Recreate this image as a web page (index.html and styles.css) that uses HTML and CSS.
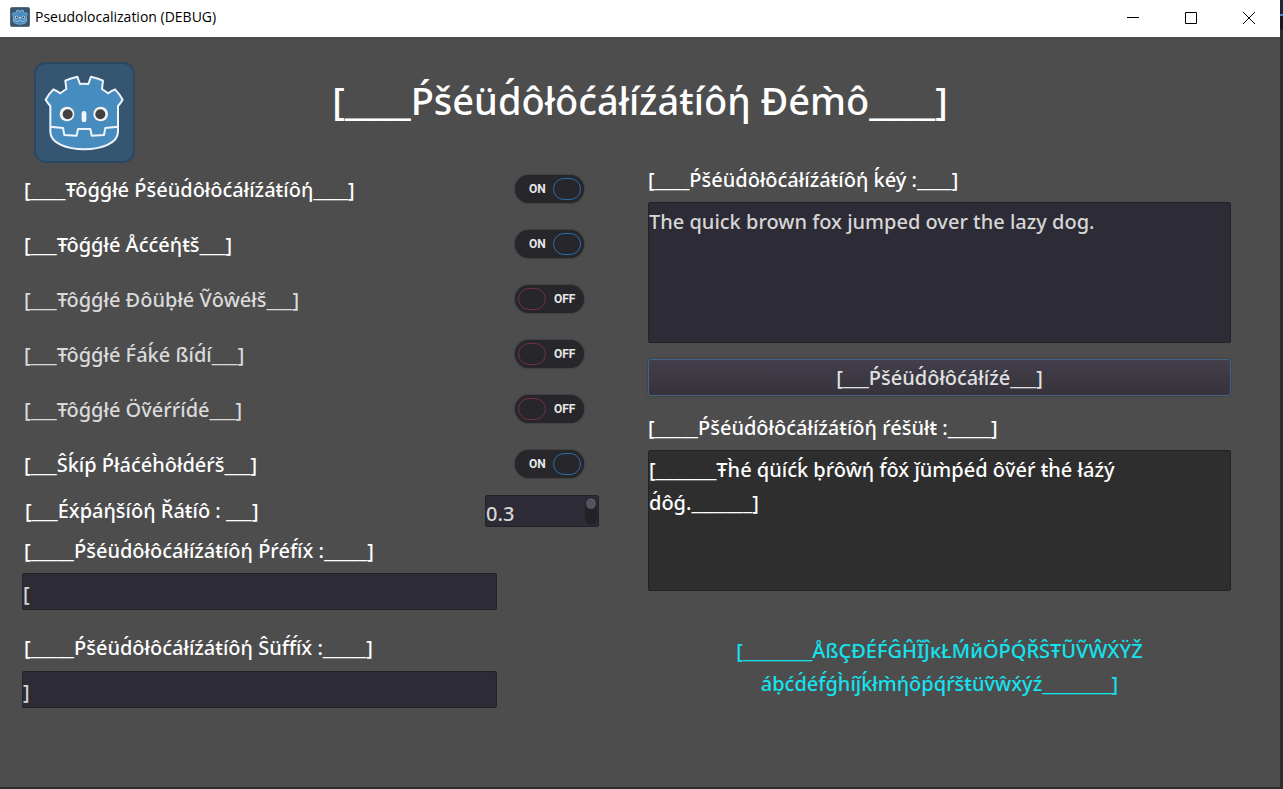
FILE: index.html
```html
<!DOCTYPE html>
<html lang="en">
<head>
<meta charset="utf-8">
<title>Pseudolocalization (DEBUG)</title>
<link rel="stylesheet" href="styles.css">
</head>
<body>
<svg class="sprite" aria-hidden="true">
  <symbol id="robot" viewBox="102 186 303 303">
    <rect x="105" y="189" width="297" height="297" rx="32" fill="#355570" stroke="#294861" stroke-width="6"/>
    <g stroke="#eef4f9" stroke-width="6" stroke-linejoin="round">
      <path fill="#478cbf" d="M240 252L232 230Q212 234 196 242L199 267Q190 273 181 280Q171 273 160 268Q147 281 137 299Q143 309 151 318V395C151 465 354 465 354 395V318Q362 309 368 299Q358 281 345 268Q334 273 324 280Q315 273 306 267L309 242Q293 234 273 230L265 252Q252 250 240 252Z"/>
      <path fill="none" d="M151 380L189 384L193 405L230 407L234 387H271L275 407L312 405L316 384L354 380"/>
    </g>
    <g fill="#f4f4f4"><circle cx="201" cy="342" r="22"/><circle cx="302" cy="342" r="22"/><rect x="245" y="333" width="14" height="34" rx="7"/></g>
    <g fill="#414042"><circle cx="203" cy="343" r="15"/><circle cx="301" cy="343" r="15"/></g>
  </symbol>
</svg>
<div class="window">
  <header class="titlebar">
    <svg class="app-icon" aria-hidden="true"><use href="#robot"/></svg>
    <span class="app-name">Pseudolocalization (DEBUG)</span>
    <button class="win-btn" aria-label="Minimize"><svg viewBox="0 0 12 12"><path d="M0 5.500H12"/></svg></button>
    <button class="win-btn" aria-label="Maximize"><svg viewBox="0 0 12 12"><path d="M.5 .5H11.500V11.500H.5Z"/></svg></button>
    <button class="win-btn" aria-label="Close"><svg viewBox="0 0 12 12"><path d="M0 0L12 12M12 0L0 12"/></svg></button>
  </header>
  <main class="content">
    <div class="banner">
      <svg class="logo" aria-hidden="true"><use href="#robot"/></svg>
      <h1 class="title">[____Ṕšéüd́ôłôćáłíźáŧíôή Ðém̀ô____]</h1>
    </div>
    <div class="columns">
      <section class="options">
        <label class="toggle-row is-on"><span>[____Ŧôǵǵłé Ṕšéüd́ôłôćáłíźáŧíôή____]</span><input class="toggle" type="checkbox" checked></label>
        <label class="toggle-row is-on"><span>[___Ŧôǵǵłé Åććéήŧš___]</span><input class="toggle" type="checkbox" checked></label>
        <label class="toggle-row"><span>[___Ŧôǵǵłé Ðôüḅłé Ṽôŵéłš___]</span><input class="toggle" type="checkbox"></label>
        <label class="toggle-row"><span>[___Ŧôǵǵłé F́áḱé ßíd́í___]</span><input class="toggle" type="checkbox"></label>
        <label class="toggle-row"><span>[___Ŧôǵǵłé Öṽéŕŕíd́é___]</span><input class="toggle" type="checkbox"></label>
        <label class="toggle-row is-on"><span>[___Ŝḱíṕ Ṕłáćéh̀ôłd́éŕš___]</span><input class="toggle" type="checkbox" checked></label>
        <div class="ratio-row">
          <label for="ratio">[___Éx́ṕáήšíôή Řáŧíô : ___]</label>
          <span class="spin"><input class="spin-input" id="ratio" type="text" value="0.3"><span class="scroll"></span></span>
        </div>
        <div class="field">
          <label for="prefix">[_____Ṕšéüd́ôłôćáłíźáŧíôή Ṕŕéf́íx́ :_____]</label>
          <input class="line-input" id="prefix" type="text" value="[">
        </div>
        <div class="field">
          <label for="suffix">[_____Ṕšéüd́ôłôćáłíźáŧíôή Ŝüf́f́íx́ :_____]</label>
          <input class="line-input" id="suffix" type="text" value="]">
        </div>
      </section>
      <section class="tester">
        <label class="tester-label" for="key">[____Ṕšéüd́ôłôćáłíźáŧíôή ḱéý :____]</label>
        <textarea class="key" id="key" spellcheck="false">The quick brown fox jumped over the lazy dog.</textarea>
        <button class="run">[___Ṕšéüd́ôłôćáłíźé___]</button>
        <label class="tester-label" for="result">[_____Ṕšéüd́ôłôćáłíźáŧíôή ŕéšüłŧ :_____]</label>
        <output class="result" id="result">[_______Ŧh̀é q́üíćḱ ḅŕôŵή f́ôx́ ǰüm̀ṕéd́ ôṽéŕ ŧh̀é łáźý<br>d́ôǵ._______]</output>
        <p class="alphabet">[________ÅßÇÐÉF́ĜĤĨĴĸŁḾйÖṔQ́ŘŜŦŨṼŴX́ŸŽ<br>áḅćd́éf́ǵh̀íǰḱłm̀ήôṕq́ŕšŧüṽŵx́ýź________]</p>
      </section>
    </div>
  </main>
</div>
</body>
</html>
```
FILE: styles.css
```css
*, *::before, *::after { box-sizing: border-box; }

body {
  margin: 0;
  min-height: 100vh;
  display: flex;
  padding: 0 3px 2px 0;
  background: linear-gradient(#1d2836 0 14px, #3d86c0 14px 16px, #17191f 16px 29px, #2c2c2e 29px 100%);
  font-family: "Noto Sans", "Open Sans", sans-serif;
  font-size: 20px;
  font-weight: 500;
  line-height: 28px;
  color: #fff;
}

.sprite { position: absolute; width: 0; height: 0; }

.window { flex: 1; display: flex; flex-direction: column; background: #4d4d4d; }

.titlebar { display: flex; height: 37px; background: #fff; color: #000; align-items: center; padding: 0 2px 0 10px; }
.app-icon { width: 20px; height: 20px; margin: 0 5px 3px 0; }
.app-name { flex: 1; font: 14px/20px "Open Sans", sans-serif; padding-bottom: 3px; }
.win-btn { width: 58px; height: 37px; border: 0; padding: 0 0 1px; background: none; display: grid; place-items: center; }
.win-btn svg { width: 12px; height: 12px; fill: none; stroke: #000; stroke-width: 1; }

.content { flex: 1; padding: 25px 49px 16px 22px; }

.banner { display: flex; align-items: flex-start; height: 100px; padding-left: 12px; }
.logo { width: 101px; height: 101px; flex: none; }
.title { flex: 1; margin: 12px 86px 0 0; text-align: center; font-size: 38px; line-height: 52px; font-weight: 500; color: #fff; white-space: nowrap; }

.columns { display: grid; grid-template-columns: 577fr 583fr; column-gap: 49px; }

.options { white-space: nowrap; }
.toggle-row { display: flex; justify-content: space-between; align-items: center; height: 55px; padding: 0 15px 0 2px; color: #dadada; }
.toggle-row.is-on { color: #fff; }

.toggle {
  appearance: none;
  position: relative;
  width: 69px;
  height: 28px;
  margin: 0 0 2px;
  border-radius: 14px;
  background: #27272b;
  box-shadow: 0 0 2px #27272b;
  font: 700 12px/28px Roboto, sans-serif;
  color: #e8e8e8;
}
.toggle::before { content: "OFF"; position: absolute; left: 39px; top: 0; }
.toggle::after { content: ""; position: absolute; left: 3px; top: 3px; width: 28px; height: 22px; border: 1px solid #71304a; border-radius: 11px; }
.toggle:checked::before { content: "ON"; left: 14px; }
.toggle:checked::after { left: 38px; border-color: #2b6da6; }

.ratio-row { display: flex; justify-content: space-between; align-items: center; height: 38px; padding-left: 3px; }
.spin { display: flex; width: 114px; height: 32px; background: #2d2b35; border: 1px solid #232227; border-radius: 2px; }
.spin-input { flex: 1; min-width: 0; border: 0; padding: 6px 0 0; background: none; font: inherit; color: #d6d6d6; }
.scroll { width: 12px; margin: 1px; border-radius: 6px; background: #232227; }
.scroll::before { content: ""; display: block; width: 10px; height: 11px; margin: 1px auto; border-radius: 50%; background: #55535e; }

.field { display: flex; flex-direction: column; padding: 7px 102px 24px 0; gap: 8px; }
.field label { padding-left: 2px; }
.field + .field { padding-top: 0; gap: 9px; }
.line-input { width: 100%; height: 37px; border: 1px solid #232227; border-radius: 2px; padding: 4px 0 0; background: #2d2b35; font: inherit; color: #d6d6d6; }

.tester { display: flex; flex-direction: column; white-space: nowrap; }
.tester-label { padding: 4px 0 8px; line-height: 28px; }
.key { display: block; width: 100%; height: 141px; resize: none; border: 1px solid #232227; border-radius: 2px; padding: 5px 0; background: #2d2b35; font: inherit; color: #d6d6d6; }
.run { height: 37px; margin: 16px 0 14px; border: 1px solid #40648a; border-radius: 3px; background: linear-gradient(#423f4a, #36333d); box-shadow: 0 0 2px #333; font: inherit; color: #e0e0e0; padding: 0; }
.result { display: block; height: 141px; border: 1px solid #232323; border-radius: 2px; padding-top: 2px; background: #2e2e2e; line-height: 33px; }
.alphabet { margin: 43px 0 0; text-align: center; line-height: 33px; color: #14e2ee; }
```
